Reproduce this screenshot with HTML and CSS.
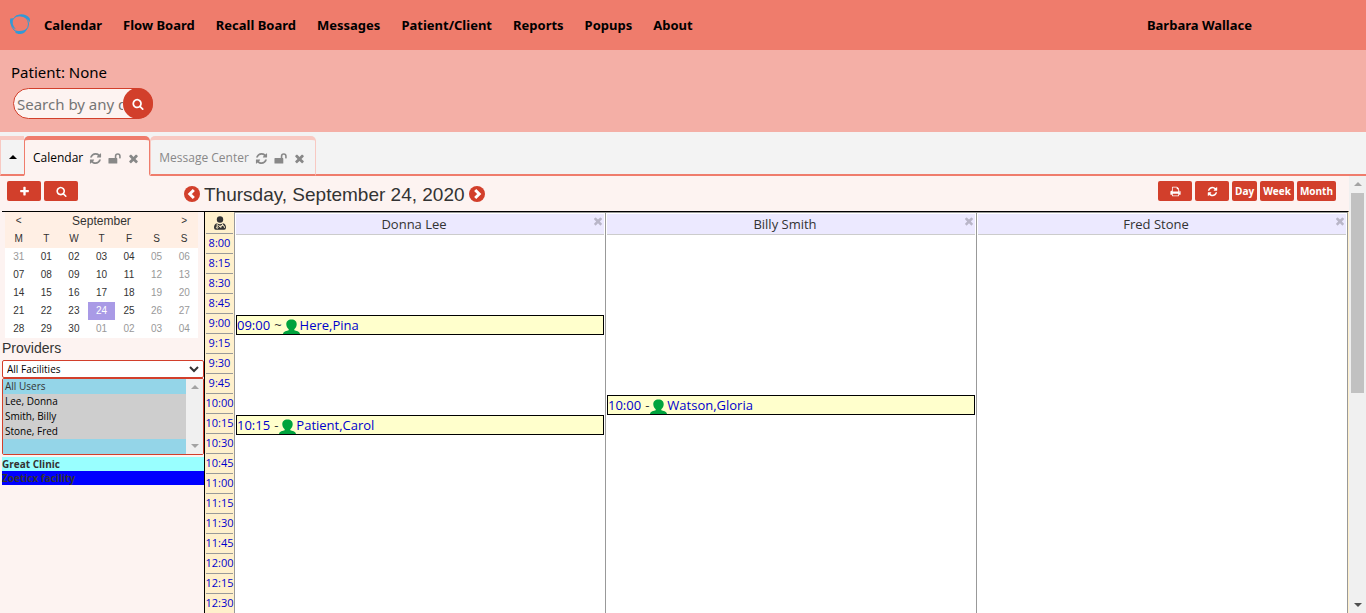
FILE: index.html
```html
<!DOCTYPE html>
<html lang="en">
<head>
<meta charset="utf-8">
<title>Calendar</title>
<link rel="stylesheet" href="styles.css">
</head>
<body>
<svg class="sprite" aria-hidden="true">
  <symbol id="search" viewBox="0 0 1792 1792"><path d="M1216 832q0-185-131.500-316.500t-316.500-131.500-316.500 131.500-131.500 316.500 131.500 316.500 316.500 131.500 316.500-131.500 131.500-316.500zm512 832q0 52-38 90t-90 38q-54 0-90-38l-343-342q-179 124-399 124-143 0-273.500-55.500t-225-150-150-225-55.500-273.500 55.500-273.500 150-225 225-150 273.500-55.500 273.500 55.500 225 150 150 225 55.500 273.500q0 220-124 399l343 343q37 37 37 90z"/></symbol>
  <symbol id="plus" viewBox="0 0 1792 1792"><path d="M1600 736v192q0 40-28 68t-68 28h-416v416q0 40-28 68t-68 28h-192q-40 0-68-28t-28-68v-416h-416q-40 0-68-28t-28-68v-192q0-40 28-68t68-28h416v-416q0-40 28-68t68-28h192q40 0 68 28t28 68v416h416q40 0 68 28t28 68z"/></symbol>
  <symbol id="times" viewBox="0 0 1792 1792"><path d="M1490 1322q0 40-28 68l-136 136q-28 28-68 28t-68-28l-294-294-294 294q-28 28-68 28t-68-28l-136-136q-28-28-28-68t28-68l294-294-294-294q-28-28-28-68t28-68l136-136q28-28 68-28t68 28l294 294 294-294q28-28 68-28t68 28l136 136q28 28 28 68t-28 68l-294 294 294 294q28 28 28 68z"/></symbol>
  <symbol id="refresh" viewBox="0 0 1792 1792"><path d="M1639 1056q0 5-1 7-64 268-268 434.500t-478 166.500q-146 0-282.500-55t-243.500-157l-129 129q-19 19-45 19t-45-19-19-45v-448q0-26 19-45t45-19h448q26 0 45 19t19 45-19 45l-137 137q71 66 161 102t187 36q134 0 250-65t186-179q11-17 53-117 8-23 30-23h192q13 0 22.500 9.500t9.500 22.500zm25-800v448q0 26-19 45t-45 19h-448q-26 0-45-19t-19-45 19-45l138-138q-148-137-349-137-134 0-250 65t-186 179q-11 17-53 117-8 23-30 23h-199q-13 0-22.500-9.500t-9.500-22.500v-7q65-268 270-434.500t480-166.500q146 0 284 55.500t245 156.500l130-129q19-19 45-19t45 19 19 45z"/></symbol>
  <symbol id="print" viewBox="0 0 1792 1792"><path d="M448 1536h896v-256h-896v256zm0-640h896v-384h-160q-40 0-68-28t-28-68v-160h-640v640zm1152 64q0-26-19-45t-45-19-45 19-19 45 19 45 45 19 45-19 19-45zm128 0v416q0 13-9.500 22.500t-22.500 9.500h-224v160q0 40-28 68t-68 28h-960q-40 0-68-28t-28-68v-160h-224q-13 0-22.500-9.500t-9.500-22.500v-416q0-79 56.500-135.500t135.500-56.500h64v-544q0-40 28-68t68-28h672q40 0 88 20t76 48l152 152q28 28 48 76t20 88v256h64q79 0 135.500 56.500t56.500 135.500z"/></symbol>
  <symbol id="unlock" viewBox="0 0 14 14"><path d="M1 6.500h6.300V4.500a3.200 3.200 0 0 1 6.400 0v2a.5.500 0 0 1-.5.500h-.7a.5.500 0 0 1-.5-.5v-2a1.500 1.500 0 0 0-3 0v2h.5q.5 0 .5.500v5q0 .5-.5.500H1q-.5 0-.5-.5V7q0-.5.500-.5z"/></symbol>
  <symbol id="person" viewBox="0 0 17 15"><path d="M8.500.5c3.400 0 5.400 2 5.200 5-.2 2.300-1 3.600-2.400 4.700v1.100c1.800.6 5.200.8 5.700 3.700H0c.5-2.900 3.900-3.100 5.700-3.700v-1.100C4.300 9.100 3.500 7.800 3.300 5.500c-.2-3 1.800-5 5.200-5z"/></symbol>
  <symbol id="doctor" viewBox="0 0 12 14"><circle cx="6" cy="3.500" r="3.200"/><path d="M3 7.200q3 2 6 0 3 .8 3 4.300 0 2.300-1.800 2.300H1.800Q0 13.800 0 11.500 0 8 3 7.200z"/><path class="cut" d="M3.200 7.600v3M8.600 7.600v2M6.800 12v-.8a1.800 1.800 0 0 1 3.600 0v.8M4.500 9l1.500 2 1.500-2"/><circle class="cut" cx="3.200" cy="11.500" r=".8"/></symbol>
</svg>

<header class="topbar">
  <svg class="logo" viewBox="0 0 22 22" aria-hidden="true"><circle cx="11" cy="12" r="8.500"/><path d="M5.300 5C9.500 1.200 17 1.400 20.800 6.400l.2 3.800c-.9-1.300-1.800-2.300-3-3.200-3.400-2.600-7.800-3.400-12.700-2z"/><path d="M1.300 6.600l2.800-.4c-1.300 4.300-.2 8 2.800 11C2.500 15.600 0 11.400 1.300 6.600z"/><path d="M18.500 16c-1.200 3.400-3.600 5.700-7 6-2.200.1-4-.5-5.200-1.600l.5-1.900c4.600 1.200 8.600.4 11.700-2.500z"/></svg>
  <nav class="menu">
    <a href="#">Calendar</a><a href="#">Flow Board</a><a href="#">Recall Board</a><a href="#">Messages</a><a href="#">Patient/Client</a><a href="#">Reports</a><a href="#">Popups</a><a href="#">About</a>
  </nav>
  <a class="user" href="#">Barbara Wallace</a>
</header>

<section class="patient">
  <div class="patient-name">Patient: None</div>
  <form class="search">
    <input type="text" aria-label="Search patients" placeholder="Search by any demographics">
    <button type="button" aria-label="Search"><svg><use href="#search"/></svg></button>
  </form>
</section>

<div class="tabs">
  <button class="tab-toggle" type="button" aria-label="Collapse"><span class="caret"></span></button>
  <div class="tab active"><a href="#">Calendar</a>
    <button type="button" aria-label="Refresh Calendar"><svg><use href="#refresh"/></svg></button>
    <button type="button" aria-label="Unlock Calendar"><svg><use href="#unlock"/></svg></button>
    <button type="button" aria-label="Close Calendar"><svg><use href="#times"/></svg></button></div>
  <div class="tab"><a href="#">Message Center</a>
    <button type="button" aria-label="Refresh Message Center"><svg><use href="#refresh"/></svg></button>
    <button type="button" aria-label="Unlock Message Center"><svg><use href="#unlock"/></svg></button>
    <button type="button" aria-label="Close Message Center"><svg><use href="#times"/></svg></button></div>
  <div class="tab-fill"></div>
</div>

<div class="frame">
  <main class="page">
    <div class="toolbar">
      <div class="tools">
        <button class="btn icon" type="button" aria-label="Add"><svg><use href="#plus"/></svg></button>
        <button class="btn icon" type="button" aria-label="Find"><svg><use href="#search"/></svg></button>
      </div>
      <div class="date">
        <button class="arrow" type="button" aria-label="Previous day"><svg viewBox="0 0 16 16"><circle cx="8" cy="8" r="8"/><path d="M9.800 4L5.800 8l4 4"/></svg></button>
        <h1>Thursday, September 24, 2020</h1>
        <button class="arrow" type="button" aria-label="Next day"><svg viewBox="0 0 16 16"><circle cx="8" cy="8" r="8"/><path d="M6.200 4l4 4-4 4"/></svg></button>
      </div>
      <div class="views">
        <button class="btn icon" type="button" aria-label="Print"><svg><use href="#print"/></svg></button>
        <button class="btn icon" type="button" aria-label="Refresh"><svg><use href="#refresh"/></svg></button>
        <button class="btn" type="button">Day</button>
        <button class="btn" type="button">Week</button>
        <button class="btn" type="button">Month</button>
      </div>
    </div>

    <div class="content">
      <aside class="side">
        <table class="month">
          <thead>
            <tr><th><a href="#">&lt;</a></th><th class="month-name" colspan="5">September</th><th><a href="#">&gt;</a></th></tr>
            <tr class="days"><th>M</th><th>T</th><th>W</th><th>T</th><th>F</th><th>S</th><th>S</th></tr>
          </thead>
          <tbody>
            <tr><td class="off">31</td><td>01</td><td>02</td><td>03</td><td>04</td><td class="off">05</td><td class="off">06</td></tr>
            <tr><td>07</td><td>08</td><td>09</td><td>10</td><td>11</td><td class="off">12</td><td class="off">13</td></tr>
            <tr><td>14</td><td>15</td><td>16</td><td>17</td><td>18</td><td class="off">19</td><td class="off">20</td></tr>
            <tr><td>21</td><td>22</td><td>23</td><td class="today">24</td><td>25</td><td class="off">26</td><td class="off">27</td></tr>
            <tr><td>28</td><td>29</td><td>30</td><td class="off">01</td><td class="off">02</td><td class="off">03</td><td class="off">04</td></tr>
          </tbody>
        </table>
        <h2>Providers</h2>
        <div class="facility">
          <select aria-label="Facility"><option>All Facilities</option></select>
          <svg viewBox="0 0 10 7" aria-hidden="true"><path d="M1 1l4 4 4-4"/></svg>
        </div>
        <div class="users">
          <select multiple size="5" aria-label="Users"><option class="plain">All Users</option><option>Lee, Donna</option><option>Smith, Billy</option><option>Stone, Fred</option></select>
          <div class="bar small"><span class="up"></span><span class="down"></span></div>
        </div>
        <div class="legend"><div class="clinic">Great Clinic</div><div class="zoeticx">Zoeticx facility</div></div>
      </aside>

      <div class="times">
        <div class="times-head"><svg><use href="#doctor"/></svg></div>
        <a href="#">8:00</a><a href="#">8:15</a><a href="#">8:30</a><a href="#">8:45</a>
        <a href="#">9:00</a><a href="#">9:15</a><a href="#">9:30</a><a href="#">9:45</a>
        <a href="#">10:00</a><a href="#">10:15</a><a href="#">10:30</a><a href="#">10:45</a>
        <a href="#">11:00</a><a href="#">11:15</a><a href="#">11:30</a><a href="#">11:45</a>
        <a href="#">12:00</a><a href="#">12:15</a><a href="#">12:30</a>
      </div>

      <section class="provider">
        <div class="provider-head"><span>Donna Lee</span><button type="button" aria-label="Close Donna Lee"><svg><use href="#times"/></svg></button></div>
        <div class="slots">
          <div class="event at-0900"><a href="#">09:00</a><span>~</span><svg><use href="#person"/></svg><a href="#">Here,Pina</a></div>
          <div class="event at-1015"><a href="#">10:15</a><span>-</span><svg><use href="#person"/></svg><a href="#">Patient,Carol</a></div>
        </div>
      </section>
      <section class="provider">
        <div class="provider-head"><span>Billy Smith</span><button type="button" aria-label="Close Billy Smith"><svg><use href="#times"/></svg></button></div>
        <div class="slots">
          <div class="event at-1000"><a href="#">10:00</a><span>-</span><svg><use href="#person"/></svg><a href="#">Watson,Gloria</a></div>
        </div>
      </section>
      <section class="provider">
        <div class="provider-head"><span>Fred Stone</span><button type="button" aria-label="Close Fred Stone"><svg><use href="#times"/></svg></button></div>
        <div class="slots"></div>
      </section>
    </div>
  </main>
  <div class="bar main-bar"><span class="up"></span><div class="thumb"></div><span class="down"></span></div>
</div>
</body>
</html>
```
FILE: styles.css
```css
* { box-sizing: border-box; }
body {
  margin: 0;
  height: 100vh;
  display: flex;
  flex-direction: column;
  overflow: hidden;
  font-family: "Open Sans", "Noto Sans", sans-serif;
  font-size: 13px;
  color: #333;
  background: #fff;
}
a { color: inherit; text-decoration: none; }
button { margin: 0; padding: 0; border: 0; background: none; font: inherit; color: inherit; }
svg { display: block; flex: none; fill: currentColor; }
.sprite { position: absolute; width: 0; height: 0; }

.topbar {
  flex: none;
  display: flex;
  align-items: center;
  height: 50px;
  padding: 0 114px 0 9px;
  background: #ef7c6c;
  color: #000;
  font-family: "Noto Sans", sans-serif;
  font-size: 13px;
  font-weight: 700;
}
.logo { width: 22px; height: 22px; margin: -4px 13px 0 0; fill: #3399d6; }
.logo circle { fill: none; stroke: #3399d6; stroke-width: 1; }
.menu { flex: 1; display: flex; gap: 21px; }

.patient { flex: none; height: 82px; padding: 12px 11px; background: #f4afa6; color: #000; }
.patient-name { font-family: "Noto Sans", sans-serif; font-size: 15px; line-height: 20px; }
.search {
  display: flex;
  width: 140px;
  height: 31px;
  margin: 6px 2px;
  border: 1px solid #d23f2b;
  border-radius: 16px;
  background: #fdf3f1;
}
.search input {
  flex: 1;
  min-width: 0;
  padding: 0 0 0 3px;
  border: 0;
  background: none;
  font-family: "Noto Sans", sans-serif;
  font-size: 15px;
}
.search input::placeholder { color: #757575; }
.search button {
  flex: none;
  width: 30px;
  height: 31px;
  margin: -1px -1px 0 0;
  border-radius: 16px;
  display: grid;
  place-items: center;
  background: #d23f2b;
  color: #fff;
}
.search svg { width: 12px; height: 12px; }

.tabs { flex: none; display: flex; height: 44px; padding-top: 4px; background: #f3f3f3; }
.tab-toggle { width: 24px; border: 1px solid #f8c9c2; border-width: 4px 0 2px 1px; border-bottom-color: #ef7c6c; display: grid; place-items: center; color: #000; }
.caret { border: 4px solid transparent; border-top: 0; border-bottom-color: #000; }
.tab {
  display: flex;
  align-items: center;
  gap: 6px;
  padding: 2px 9px 0 8px;
  border: 1px solid #f8c9c2;
  border-width: 4px 1px 2px;
  border-bottom-color: #ef7c6c;
  border-radius: 5px 5px 0 0;
  color: #888;
  font-size: 12px;
}
.tab a { line-height: 18px; }
.tab svg { width: 13px; height: 13px; color: #888; }
.tab.active { border-color: #ef7c6c; border-bottom-color: #fdf3f1; background: #fdf3f1; }
.tab.active a { color: #000; }
.tab-fill { flex: 1; border-bottom: 2px solid #ef7c6c; }

.frame { flex: 1; min-height: 0; display: flex; }
.page { flex: 1; min-width: 0; display: flex; flex-direction: column; background: #fdf3f1; overflow: hidden; }
.toolbar { flex: none; display: flex; height: 35px; padding: 5px 13px 0 7px; }
.tools, .views { display: flex; gap: 3px; }
.tools { width: 177px; }
.btn {
  height: 20px;
  padding: 0 3px;
  border-radius: 2px;
  background: #d23f2b;
  color: #fff;
  font-size: 10px;
  line-height: 20px;
  font-weight: 700;
}
.btn.icon { width: 34px; display: grid; place-items: center; }
.btn svg { width: 11px; height: 11px; }
.date { flex: 1; display: flex; align-items: flex-start; gap: 4px; padding-top: 2px; }
.date h1 { margin: 0; font: 400 19px/24px "Liberation Sans", Arial, sans-serif; }
.arrow { margin-top: 3px; }
.arrow svg { width: 16px; height: 16px; fill: #d23f2b; }
.arrow path { fill: none; stroke: #fff; stroke-width: 3; }

.content { flex: 1; min-height: 0; display: flex; margin-left: 2px; border-top: 1px solid #000; border-right: 1px solid #fff0cc; }
.side { flex: none; width: 203px; border-right: 1px solid #000; }
.month {
  width: 193px;
  margin-left: 3px;
  border-collapse: collapse;
  table-layout: fixed;
  background: #fff;
  font: 400 10px/18px "Liberation Sans", Arial, sans-serif;
  text-align: center;
}
.month th { padding: 0; font-weight: 400; line-height: 17px; background: #ffefe4; }
.month td { padding: 0; }
.month .month-name { font-size: 12px; line-height: 16px; }
.month .days th { line-height: 19px; }
.month .off { color: #999; }
.month .today { background: #a99ae6; color: #fff; }
.side h2 { margin: 1px 0 3px; font: 400 14px/18px "Liberation Sans", Arial, sans-serif; }
.facility {
  display: flex;
  align-items: center;
  height: 18px;
  padding-right: 4px;
  border: 1px solid #d23f2b;
  border-radius: 2px;
  background: #fff;
}
.facility select { flex: 1; appearance: none; padding: 0 4px; border: 0; background: none; font: 400 10px/16px "Open Sans", sans-serif; color: #000; }
.facility svg { width: 10px; height: 7px; fill: none; stroke: #333; stroke-width: 2; }
.users { display: flex; height: 77px; border: 1px solid #d23f2b; border-radius: 2px; }
.users select { flex: 1; min-width: 0; height: 75px; padding: 0; border: 0; border-radius: 0; background: #94d5e8; overflow: hidden; font: 400 10px/15px "Open Sans", sans-serif; }
.users option { height: 15px; min-height: 15px; padding: 0 2px; line-height: 15px; background: #cecece; color: #000; }
.users .plain { background: #94d5e8; color: #333; }
.legend { margin-top: 2px; font-size: 10px; line-height: 14px; font-weight: 700; }
.clinic { background: #99ffff; }
.zoeticx { background: #00f; }

.bar { flex: none; width: 17px; display: flex; flex-direction: column; align-items: center; padding: 6px 0; background: #f0f0f0; }
.bar .up { border: 4px solid transparent; border-top: 0; border-bottom-color: #a3a3a3; }
.bar .down { margin-top: auto; border: 4px solid transparent; border-bottom: 0; border-top-color: #a3a3a3; }
.main-bar .down { border-top-color: #505050; }
.thumb { flex: none; width: 13px; height: 47%; margin-top: 7px; background: #c1c1c1; }

.times { flex: none; width: 29px; padding: 0 1px; background: #fff0cc; color: #00c; }
.times a { display: flex; justify-content: center; height: 20px; border-bottom: 1px solid #999; line-height: 18px; font-size: 11px; }
.times-head { height: 22px; border-bottom: 1px solid #999; display: grid; place-items: center; color: #333; }
.times svg { width: 12px; height: 14px; }
.cut { fill: none; stroke: #fff0cc; stroke-width: 1; }

.provider { flex: 1; min-width: 0; padding: 1px 1px 0; border: 1px solid #999; border-width: 1px 0 0 1px; background: #fff; }
.provider:last-child { border-right-width: 1px; }
.provider-head { display: flex; height: 21px; border-bottom: 1px solid #ccc; background: #ece9ff; }
.provider-head span { flex: 1; text-align: center; line-height: 20px; }
.provider-head button { height: 14px; }
.provider-head svg { width: 12px; height: 14px; color: #b9b6c8; }
.slots { display: grid; grid-auto-rows: 20px; }
.event { display: flex; align-items: center; border: 1px solid #000; background: #ffc; line-height: 20px; white-space: nowrap; overflow: hidden; }
.event a { color: #00c; }
.event span { margin: 0 1px 0 4px; }
.event svg { width: 17px; height: 15px; margin-top: 3px; color: #00a33d; }
.at-0900 { grid-row: 5; }
.at-1000 { grid-row: 9; }
.at-1015 { grid-row: 10; }
```
